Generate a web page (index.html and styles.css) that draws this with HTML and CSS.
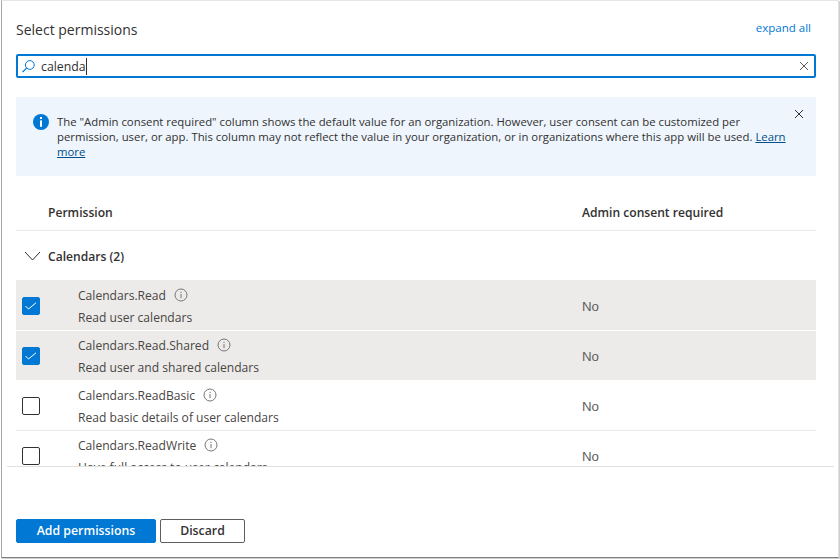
FILE: index.html
```html
<!DOCTYPE html>
<html lang="en">
<head>
    <meta charset="UTF-8">
    <title>Select permissions</title>
    <link rel="stylesheet" href="styles.css">
</head>
<body>

<div class="panel">
    <div class="content">
        <div class="title-row">
            <h2>Select permissions</h2>
            <a class="expand" href="#">expand all</a>
        </div>

        <div class="search">
            <svg class="search-icon" width="14" height="14" viewBox="0 0 14 14"><circle cx="7.800" cy="6" r="4.400" fill="none" stroke="#0078d4" stroke-width="1"/><path d="M4.700 9.100L0.500 13" stroke="#0078d4" stroke-width="1.200" fill="none"/></svg>
            <span class="search-text">calenda</span><span class="caret"></span>
            <svg class="search-clear" width="10" height="10" viewBox="0 0 10 10"><path d="M1 1L9 9M9 1L1 9" stroke="#605e5c" stroke-width="1" fill="none"/></svg>
        </div>

        <div class="notice">
            <svg class="notice-icon" width="16" height="16" viewBox="0 0 16 16"><circle cx="8" cy="8" r="8" fill="#0078d4"/><rect x="7" y="3" width="2" height="2" fill="#fff"/><rect x="7" y="6.400" width="2" height="6.400" fill="#fff"/></svg>
            <p>The "Admin consent required" column shows the default value for an organization. However, user consent can be customized per permission, user, or app. This column may not reflect the value in your organization, or in organizations where this app will be used. <a href="#">Learn more</a></p>
            <svg class="notice-close" width="10" height="10" viewBox="0 0 10 10"><path d="M1 1L9 9M9 1L1 9" stroke="#323130" stroke-width="1" fill="none"/></svg>
        </div>

        <div class="table-head">
            <div class="col-name">Permission</div>
            <div class="col-admin">Admin consent required</div>
        </div>

        <div class="group">
            <svg width="18" height="10" viewBox="0 0 18 10"><path d="M2 1L9.500 9L17 1" stroke="#323130" stroke-width="1" fill="none"/></svg>
            <span>Calendars (2)</span>
        </div>
    </div>

    <div class="rows">
        <div class="row selected">
            <span class="check on"><svg width="12" height="8" viewBox="0 0 12 8"><path d="M0.500 4L3.500 7L11 0.800" stroke="#fff" stroke-width="1" fill="none"/></svg></span>
            <div class="perm">
                <div class="perm-name">Calendars.Read <svg class="info" width="14" height="14" viewBox="0 0 14 14"><circle cx="7" cy="7" r="6" fill="none" stroke="#777" stroke-width="1"/><path d="M7 6v4.200M7 3.800v1.200" stroke="#777" stroke-width="1" fill="none"/></svg></div>
                <div class="perm-desc">Read user calendars</div>
            </div>
            <div class="admin">No</div>
        </div>
        <div class="row selected">
            <span class="check on"><svg width="12" height="8" viewBox="0 0 12 8"><path d="M0.500 4L3.500 7L11 0.800" stroke="#fff" stroke-width="1" fill="none"/></svg></span>
            <div class="perm">
                <div class="perm-name">Calendars.Read.Shared <svg class="info" width="14" height="14" viewBox="0 0 14 14"><circle cx="7" cy="7" r="6" fill="none" stroke="#777" stroke-width="1"/><path d="M7 6v4.200M7 3.800v1.200" stroke="#777" stroke-width="1" fill="none"/></svg></div>
                <div class="perm-desc">Read user and shared calendars</div>
            </div>
            <div class="admin">No</div>
        </div>
        <div class="row">
            <span class="check"></span>
            <div class="perm">
                <div class="perm-name">Calendars.ReadBasic <svg class="info" width="14" height="14" viewBox="0 0 14 14"><circle cx="7" cy="7" r="6" fill="none" stroke="#777" stroke-width="1"/><path d="M7 6v4.200M7 3.800v1.200" stroke="#777" stroke-width="1" fill="none"/></svg></div>
                <div class="perm-desc">Read basic details of user calendars</div>
            </div>
            <div class="admin">No</div>
        </div>
        <div class="row">
            <span class="check"></span>
            <div class="perm">
                <div class="perm-name">Calendars.ReadWrite <svg class="info" width="14" height="14" viewBox="0 0 14 14"><circle cx="7" cy="7" r="6" fill="none" stroke="#777" stroke-width="1"/><path d="M7 6v4.200M7 3.800v1.200" stroke="#777" stroke-width="1" fill="none"/></svg></div>
                <div class="perm-desc">Have full access to user calendars</div>
            </div>
            <div class="admin">No</div>
        </div>
    </div>

    <div class="footer">
        <button class="primary" type="button">Add permissions</button>
        <button class="secondary" type="button">Discard</button>
    </div>
</div>

</body>
</html>
```

FILE: styles.css
```css
html, body {
    margin: 0;
    padding: 0;
    height: 100%;
    background-color: #fff;
}
body {
    font-family: "Open Sans", "Noto Sans", Arial, sans-serif;
    font-size: 12px;
    color: #323130;
    overflow: hidden;
}
.panel {
    box-sizing: border-box;
    width: 838px;
    height: 558px;
    margin-left: 1px;
    padding-top: 1px;
    background-color: #fff;
    border-left: 1px solid #a6a6a6;
    border-bottom: 1px solid #808080;
    border-right: 1px solid #e0e0e0;
    border-top: 1px solid #e6e6e6;
    box-shadow: 1px 1px 0 #cfcfcf;
    display: flex;
    flex-direction: column;
}
.content {
    padding: 0 20px 0 14px;
    margin-right: 2px;
}
.title-row {
    box-sizing: border-box;
    display: flex;
    justify-content: space-between;
    align-items: center;
    height: 52px;
    padding-top: 2px;
}
h2 {
    margin: 0;
    font-size: 14px;
    font-weight: 400;
    color: #323130;
}
.expand {
    color: #0078d4;
    text-decoration: none;
    font-size: 11.500px;
    margin-right: 5px;
    margin-bottom: 3px;
}
.search {
    box-sizing: border-box;
    height: 24px;
    border: 2px solid #0078d4;
    border-radius: 2px;
    display: flex;
    align-items: center;
    padding: 0 5px 0 4px;
}
.search-icon {
    margin-right: 5px;
}
.search-text {
    font-size: 12.300px;
}
.caret {
    width: 1px;
    height: 17px;
    background-color: #323130;
}
.search-clear {
    margin-left: auto;
}
.notice {
    display: flex;
    align-items: flex-start;
    margin-top: 19px;
    height: 79px;
    box-sizing: border-box;
    padding: 15px 12px 0 17px;
    background-color: #eef5fd;
    border-radius: 2px;
}
.notice-icon {
    flex: none;
    margin-top: 2px;
    margin-right: 8px;
}
.notice p {
    margin: 2px 0 0;
    flex: 1;
    font-size: 11.350px;
    line-height: 15px;
}
.notice a {
    color: #004e8c;
}
.notice-close {
    flex: none;
    margin-left: 4px;
    margin-top: -3px;
}
.table-head {
    display: flex;
    height: 55px;
    box-sizing: border-box;
    padding-top: 28px;
    border-bottom: 1px solid #edebe9;
    font-weight: 600;
    font-size: 12.100px;
}
.col-name {
    width: 534px;
    padding-left: 32px;
}
.group {
    box-sizing: border-box;
    display: flex;
    align-items: center;
    height: 49px;
    padding: 1px 0 0 7px;
    font-weight: 600;
    font-size: 12.100px;
    gap: 7px;
}
.rows {
    height: 186px;
    overflow: hidden;
    margin: 0 22px 0 14px;
    flex: none;
}
.row {
    display: flex;
    align-items: center;
    height: 50px;
    padding-top: 1px;
    box-sizing: border-box;
    border-bottom: 1px solid #edebe9;
    color: #484644;
    font-size: 12.100px;
}
.row:first-child {
    height: 51px;
    padding-top: 2px;
}
.row.selected {
    background-color: #ecebe9;
    border-bottom-color: #fff;
}
.check {
    flex: none;
    box-sizing: border-box;
    width: 18px;
    height: 18px;
    margin-left: 6px;
    border: 1px solid #323130;
    border-radius: 2px;
    display: flex;
    align-items: center;
    justify-content: center;
}
.check.on {
    background-color: #0078d4;
    border-color: #0078d4;
}
.perm {
    width: 504px;
    margin-left: 38px;
}
.perm-name {
    display: flex;
    align-items: center;
    gap: 8px;
    height: 22px;
}
.perm-desc {
    height: 22px;
    line-height: 24px;
}
.admin {
    font-family: "Liberation Sans", Arial, sans-serif;
    font-size: 13.300px;
    color: #605e5c;
}
.footer {
    flex: 1;
    margin: 0 4px 0 5px;
    padding: 0 0 14px 9px;
    border-top: 1px solid #e1e1e1;
    display: flex;
    align-items: flex-end;
    gap: 4px;
}
button {
    font-family: inherit;
    font-size: 12.300px;
    font-weight: 600;
    height: 24px;
    padding: 0 0 2px;
    border-radius: 2px;
    cursor: pointer;
}
.primary {
    width: 140px;
    background-color: #0078d4;
    color: #fff;
    border: 1px solid #0078d4;
}
.secondary {
    width: 85px;
    background-color: #fff;
    color: #323130;
    border: 1px solid #605e5c;
}
```
